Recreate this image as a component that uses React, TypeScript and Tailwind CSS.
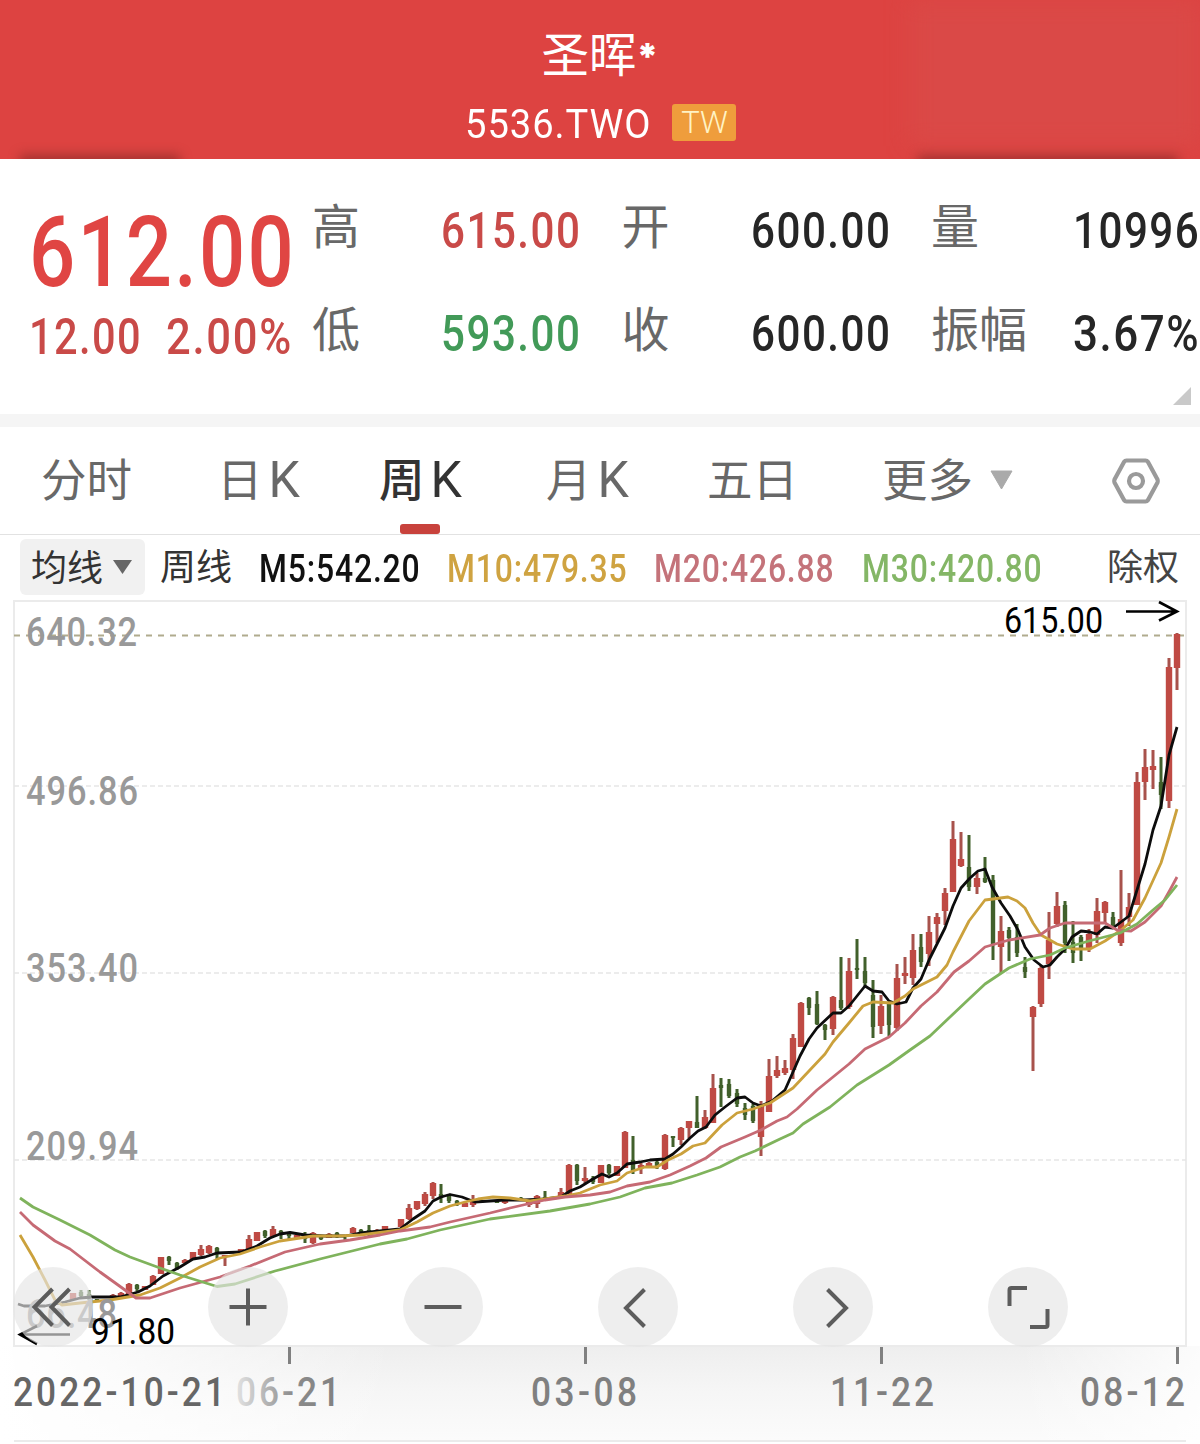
import { useState } from 'react';
import { clsx } from 'clsx';

type Candle = [x: number, high: number, top: number, bottom: number, low: number, dir: 'u' | 'd'];
type Point = [number, number];

const UP = '#bf4a44';
const UP_WICK = '#a8524c';
const DOWN = '#41602b';

const candles: Candle[] = [
  [73, 1293, 1293, 1300, 1300, 'u'],
  [81, 1290, 1292, 1296, 1298, 'd'],
  [89, 1290, 1294, 1298, 1300, 'd'],
  [97, 1299, 1299, 1302, 1302, 'd'],
  [113, 1294, 1295, 1297, 1297, 'u'],
  [121, 1292, 1293, 1296, 1296, 'u'],
  [129, 1283, 1284, 1294, 1294, 'u'],
  [137, 1284, 1285, 1289, 1291, 'd'],
  [145, 1286, 1286, 1290, 1290, 'u'],
  [153, 1275, 1276, 1285, 1285, 'u'],
  [161, 1257, 1257, 1274, 1274, 'u'],
  [169, 1256, 1257, 1261, 1265, 'd'],
  [177, 1262, 1263, 1269, 1270, 'd'],
  [185, 1259, 1260, 1263, 1263, 'u'],
  [193, 1252, 1252, 1260, 1260, 'u'],
  [201, 1245, 1249, 1255, 1256, 'u'],
  [209, 1245, 1246, 1253, 1254, 'u'],
  [217, 1247, 1248, 1254, 1259, 'd'],
  [225, 1255, 1255, 1257, 1266, 'u'],
  [241, 1249, 1249, 1253, 1253, 'u'],
  [249, 1235, 1239, 1250, 1250, 'u'],
  [257, 1232, 1232, 1241, 1241, 'u'],
  [265, 1230, 1231, 1236, 1238, 'd'],
  [273, 1226, 1229, 1237, 1237, 'u'],
  [281, 1230, 1231, 1234, 1239, 'd'],
  [289, 1232, 1233, 1236, 1240, 'd'],
  [297, 1234, 1235, 1239, 1239, 'u'],
  [305, 1232, 1236, 1239, 1243, 'd'],
  [313, 1232, 1233, 1243, 1244, 'u'],
  [321, 1236, 1237, 1239, 1240, 'd'],
  [329, 1233, 1234, 1238, 1238, 'u'],
  [337, 1232, 1233, 1236, 1238, 'd'],
  [345, 1235, 1235, 1237, 1240, 'd'],
  [353, 1227, 1228, 1233, 1233, 'u'],
  [361, 1229, 1230, 1233, 1234, 'd'],
  [369, 1225, 1230, 1232, 1236, 'd'],
  [377, 1229, 1230, 1232, 1232, 'u'],
  [385, 1226, 1226, 1230, 1230, 'u'],
  [401, 1219, 1219, 1227, 1227, 'u'],
  [409, 1204, 1208, 1219, 1220, 'u'],
  [417, 1201, 1201, 1209, 1210, 'u'],
  [425, 1192, 1194, 1204, 1206, 'u'],
  [433, 1182, 1183, 1196, 1199, 'u'],
  [441, 1184, 1194, 1198, 1203, 'd'],
  [449, 1195, 1196, 1201, 1203, 'd'],
  [457, 1200, 1201, 1205, 1206, 'd'],
  [465, 1203, 1203, 1207, 1207, 'u'],
  [473, 1195, 1202, 1205, 1207, 'u'],
  [481, 1200, 1201, 1203, 1203, 'd'],
  [497, 1200, 1201, 1203, 1203, 'd'],
  [505, 1200, 1200, 1203, 1204, 'u'],
  [521, 1197, 1198, 1200, 1201, 'd'],
  [529, 1200, 1202, 1205, 1207, 'u'],
  [537, 1195, 1196, 1204, 1208, 'u'],
  [545, 1191, 1197, 1198, 1198, 'd'],
  [561, 1188, 1192, 1197, 1197, 'u'],
  [569, 1164, 1165, 1194, 1194, 'u'],
  [577, 1164, 1165, 1181, 1185, 'd'],
  [585, 1167, 1178, 1181, 1183, 'u'],
  [593, 1176, 1178, 1182, 1184, 'd'],
  [601, 1165, 1165, 1183, 1183, 'u'],
  [609, 1164, 1165, 1173, 1175, 'd'],
  [617, 1166, 1166, 1176, 1176, 'u'],
  [625, 1131, 1132, 1168, 1168, 'u'],
  [633, 1136, 1160, 1171, 1174, 'd'],
  [641, 1163, 1165, 1168, 1174, 'u'],
  [649, 1162, 1163, 1168, 1168, 'u'],
  [657, 1160, 1162, 1167, 1169, 'd'],
  [665, 1134, 1135, 1169, 1170, 'u'],
  [673, 1136, 1136, 1138, 1147, 'd'],
  [681, 1127, 1128, 1140, 1145, 'u'],
  [689, 1121, 1121, 1128, 1138, 'u'],
  [697, 1096, 1122, 1128, 1128, 'd'],
  [705, 1110, 1117, 1128, 1129, 'u'],
  [713, 1074, 1088, 1123, 1123, 'u'],
  [721, 1078, 1085, 1088, 1107, 'd'],
  [729, 1079, 1084, 1096, 1098, 'd'],
  [737, 1089, 1093, 1104, 1107, 'd'],
  [745, 1103, 1108, 1115, 1120, 'd'],
  [753, 1104, 1106, 1121, 1123, 'd'],
  [761, 1101, 1105, 1137, 1156, 'u'],
  [769, 1059, 1076, 1112, 1112, 'u'],
  [777, 1056, 1070, 1076, 1078, 'u'],
  [785, 1060, 1068, 1073, 1075, 'u'],
  [793, 1034, 1038, 1070, 1079, 'u'],
  [801, 1002, 1003, 1047, 1047, 'u'],
  [809, 997, 998, 1008, 1015, 'd'],
  [817, 991, 1004, 1024, 1025, 'd'],
  [825, 1024, 1025, 1030, 1040, 'd'],
  [833, 996, 997, 1029, 1035, 'u'],
  [841, 957, 1000, 1008, 1010, 'd'],
  [849, 958, 971, 1007, 1009, 'u'],
  [857, 939, 968, 970, 979, 'd'],
  [865, 957, 971, 983, 987, 'd'],
  [873, 980, 995, 1027, 1038, 'd'],
  [881, 995, 1006, 1026, 1034, 'u'],
  [889, 1003, 1004, 1025, 1036, 'd'],
  [897, 964, 978, 1028, 1031, 'u'],
  [905, 957, 973, 976, 984, 'u'],
  [913, 934, 950, 978, 985, 'u'],
  [921, 934, 947, 962, 967, 'd'],
  [929, 916, 932, 954, 966, 'u'],
  [937, 913, 917, 924, 943, 'u'],
  [945, 888, 893, 911, 925, 'u'],
  [953, 821, 839, 892, 892, 'u'],
  [961, 832, 859, 866, 867, 'u'],
  [969, 835, 867, 887, 891, 'd'],
  [977, 873, 878, 887, 894, 'u'],
  [985, 857, 878, 882, 883, 'd'],
  [993, 875, 880, 945, 960, 'd'],
  [1001, 916, 931, 947, 973, 'u'],
  [1009, 927, 930, 938, 961, 'd'],
  [1017, 924, 937, 953, 957, 'd'],
  [1025, 957, 967, 972, 978, 'd'],
  [1033, 1006, 1007, 1017, 1071, 'u'],
  [1041, 965, 968, 1004, 1007, 'u'],
  [1049, 912, 940, 964, 979, 'u'],
  [1057, 892, 906, 924, 927, 'u'],
  [1065, 901, 905, 943, 953, 'd'],
  [1073, 921, 942, 953, 963, 'd'],
  [1081, 935, 937, 950, 961, 'd'],
  [1089, 929, 934, 948, 952, 'u'],
  [1097, 898, 911, 935, 943, 'u'],
  [1105, 901, 902, 913, 923, 'u'],
  [1113, 912, 917, 926, 928, 'd'],
  [1121, 870, 919, 943, 946, 'u'],
  [1129, 893, 907, 917, 926, 'u'],
  [1137, 772, 782, 905, 905, 'u'],
  [1145, 749, 767, 782, 800, 'u'],
  [1153, 750, 766, 770, 789, 'u'],
  [1161, 757, 782, 795, 809, 'd'],
  [1169, 658, 667, 801, 808, 'u'],
  [1177, 633, 634, 668, 690, 'u'],
];

const m5: Point[] = [
  [18, 1304], [24, 1306], [45, 1306], [65, 1302], [80, 1298], [92, 1297], [120, 1297], [138, 1292],
  [150, 1286], [163, 1276], [180, 1267], [193, 1259], [205, 1257], [217, 1253], [241, 1252], [257, 1246],
  [270, 1238], [280, 1234], [290, 1232.5], [305, 1235], [325, 1236], [345, 1236], [360, 1233], [380, 1231],
  [400, 1229], [413, 1219], [425, 1211], [433, 1201], [441, 1197], [450, 1194.5], [462, 1197], [475, 1202],
  [490, 1201], [505, 1200], [525, 1200], [545, 1199], [561, 1197], [570, 1191], [580, 1187], [593, 1179],
  [602, 1174], [609, 1177], [617, 1173], [627, 1164], [640, 1162], [650, 1160], [665, 1159], [673, 1154],
  [681, 1147], [690, 1138], [698, 1131], [706, 1127], [715, 1115], [725, 1107], [737, 1098], [745, 1097],
  [753, 1103], [761, 1106], [772, 1101], [785, 1090], [793, 1072], [800, 1056], [809, 1039], [817, 1028],
  [833, 1013], [841, 1013], [849, 1006], [865, 986], [873, 991], [882, 992], [889, 1001], [897, 1004],
  [906, 1002], [913, 988], [921, 979], [929, 960], [937, 944], [945, 928], [953, 906], [961, 888],
  [970, 878], [978, 871], [985, 869], [992, 887], [1001, 903], [1010, 916], [1018, 930], [1025, 947],
  [1034, 960], [1043, 967], [1050, 965], [1057, 957], [1065, 949], [1072, 937], [1081, 931], [1090, 932],
  [1097, 934], [1105, 927], [1113, 928], [1129, 916], [1137, 890], [1145, 864], [1153, 830], [1161, 806],
  [1169, 755], [1177, 727],
];

const m10: Point[] = [
  [20, 1235], [33, 1257], [45, 1280], [55, 1300], [62, 1305], [80, 1303], [110, 1300], [140, 1295],
  [160, 1288], [180, 1278], [200, 1267], [220, 1258], [240, 1254], [260, 1247], [280, 1241], [300, 1238],
  [313, 1236], [340, 1236], [360, 1235], [400, 1230], [417, 1222], [433, 1213], [450, 1206], [465, 1202],
  [478, 1199], [493, 1197], [510, 1198], [530, 1201], [545, 1199], [565, 1196], [580, 1193], [600, 1185],
  [617, 1181], [627, 1173], [645, 1167], [657, 1167], [668, 1160], [681, 1154], [693, 1146], [705, 1143],
  [722, 1125], [737, 1113], [753, 1109], [770, 1103], [793, 1088], [809, 1071], [825, 1054], [833, 1042],
  [849, 1023], [863, 1006], [873, 1002], [893, 1003], [905, 996], [913, 989], [921, 985], [937, 977],
  [947, 965], [953, 952], [969, 921], [985, 900], [993, 899], [1008, 897], [1017, 901], [1025, 908],
  [1033, 923], [1041, 935], [1057, 944], [1073, 949], [1090, 949], [1105, 941], [1121, 930], [1133, 920],
  [1145, 898], [1161, 863], [1169, 837], [1177, 809],
];

const m20: Point[] = [
  [20, 1212], [33, 1225], [55, 1241], [70, 1249], [100, 1272], [125, 1290], [136, 1298], [150, 1298],
  [180, 1288], [220, 1277], [250, 1266], [285, 1252], [320, 1244], [350, 1240], [380, 1235], [400, 1231],
  [430, 1227], [450, 1222], [490, 1213], [510, 1208], [545, 1200], [565, 1197], [590, 1195], [610, 1192],
  [627, 1186], [650, 1182], [670, 1175], [690, 1166], [706, 1158], [721, 1147], [745, 1137], [761, 1130],
  [777, 1121], [787, 1117], [797, 1109], [817, 1090], [849, 1064], [865, 1049], [889, 1037], [905, 1023],
  [921, 1006], [937, 992], [954, 972], [969, 961], [985, 947], [1009, 940], [1040, 935], [1050, 928],
  [1065, 923], [1090, 923], [1105, 923], [1117, 930], [1131, 931], [1145, 922], [1161, 906], [1170, 890],
  [1177, 877],
];

const m30: Point[] = [
  [20, 1198], [33, 1207], [60, 1220], [90, 1235], [115, 1250], [130, 1257], [160, 1268], [180, 1275],
  [217, 1286.5], [235, 1284], [275, 1271], [320, 1259], [360, 1249], [380, 1244], [407, 1239], [440, 1230],
  [490, 1219], [550, 1211], [590, 1204], [620, 1197], [645, 1188], [672, 1183], [697, 1175], [720, 1167],
  [740, 1157], [755, 1151], [780, 1139], [793, 1133], [803, 1124], [830, 1107], [857, 1085], [889, 1065],
  [910, 1050], [930, 1036], [950, 1017], [969, 999], [985, 984], [1009, 968], [1030, 959], [1050, 955],
  [1065, 948], [1089, 941], [1120, 933], [1137, 924], [1153, 910], [1165, 900], [1177, 885],
];

const averages = [
  { points: m5, color: '#0c0c0c' },
  { points: m10, color: '#cba13c' },
  { points: m20, color: '#c66a74' },
  { points: m30, color: '#7fb35c' },
];

const priceLabels = [
  { text: '640.32', y: 646, width: 111 },
  { text: '496.86', y: 805, width: 112 },
  { text: '353.40', y: 982, width: 112 },
  { text: '209.94', y: 1160, width: 112 },
  { text: '66.48', y: 1328, width: 91 },
];

const dateLabels = [
  { text: '2022-10-21', x: 13, width: 212, fill: '#666' },
  { text: '06-21', x: 236, width: 104, fill: 'url(#dateFade)' },
  { text: '03-08', x: 531, width: 106, fill: '#808080' },
  { text: '11-22', x: 830, width: 104, fill: '#808080' },
  { text: '08-12', x: 1080, width: 105, fill: '#808080' },
];

const tabs = [
  { label: '分时', cell: 'w-[176px]' },
  { label: '日K', cell: 'w-[162px]' },
  { label: '周K', cell: 'w-[167px]' },
  { label: '月K', cell: 'w-[161px]' },
  { label: '五日', cell: 'w-[161px]' },
];

const stats = [
  [
    { name: '高', value: '615.00', color: 'text-[#c94a48]' },
    { name: '低', value: '593.00', color: 'text-[#429a58]' },
  ],
  [
    { name: '开', value: '600.00', color: 'text-[#262626]' },
    { name: '收', value: '600.00', color: 'text-[#262626]' },
  ],
  [
    { name: '量', value: '10996', color: 'text-[#262626]' },
    { name: '振幅', value: '3.67%', color: 'text-[#262626]' },
  ],
];

const legend = [
  { text: 'M5:542.20', cell: 'w-[188px]', color: 'text-[#111]' },
  { text: 'M10:479.35', cell: 'w-[207px]', color: 'text-[#cfa341]' },
  { text: 'M20:426.88', cell: 'w-[208px]', color: 'text-[#c4737a]' },
  { text: 'M30:420.80', cell: 'w-[244px]', color: 'text-[#84b666]' },
];

const controls = [
  { name: 'rewind', d: 'M39.500 22 21.500 40 39.500 58.500M56.500 22 38.500 40 56.500 58.500' },
  { name: 'zoom in', d: 'M21.500 40h37M40 21.500v37' },
  { name: 'zoom out', d: 'M21.500 40h37' },
  { name: 'previous', d: 'M46.500 22.500 28 41 46.500 59.500' },
  { name: 'next', d: 'M34.500 22.500 53 41 34.500 59.500' },
  { name: 'full screen', d: 'M21.500 39V23q0-2 2-2H39M59.500 42V58q0 2-2 2H42' },
];

const digits = "font-['Roboto','Noto_Sans_CJK_SC',sans-serif]";

const toPath = (points: Point[]) => 'M' + points.map(([x, y]) => `${x} ${y}`).join('L');

function Header() {
  return (
    <header className="relative flex h-[159px] flex-col items-center overflow-hidden bg-[#dd4341] text-white">
      <div className="absolute -bottom-3 left-5 h-4 w-[160px] bg-[#7c2624]/60 blur-[6px]" />
      <div className="absolute -bottom-3 left-[918px] h-4 w-[260px] bg-[#7c2624]/60 blur-[6px]" />
      <div className="absolute top-0 left-[910px] h-[146px] w-[290px] bg-[#d65350]/40 blur-md" />
      <h1 className="mt-[25px] flex h-[54px] items-center text-[47.500px] leading-[54px]">
        圣晖<span className="relative top-1 font-['Inter'] text-[36px] font-black">*</span>
      </h1>
      <div className="mt-[19px] flex h-[50px] items-center">
        <span className={clsx(digits, 'w-[187px] pt-1 text-[41px] whitespace-nowrap')}>
          <span className="inline-block origin-left scale-x-[0.93] tracking-[0.025em]">5536.TWO</span>
        </span>
        <span className={clsx(digits, 'mb-[2px] ml-[20px] flex h-[37px] w-[64px] items-center justify-center rounded-[3px] bg-[#ef9d3c] pt-0.5 pl-0.5 text-[31px] font-light text-[#fff3c4]')}>
          TW
        </span>
      </div>
    </header>
  );
}

function Quote() {
  return (
    <section className={clsx(digits, 'relative flex h-[255px] overflow-hidden whitespace-nowrap')}>
      <div className="w-[312px] shrink-0 pl-[29px] font-medium">
        <div className="mt-[43px] h-[102px] origin-left scale-x-[0.83] text-[98px] leading-[102px] tracking-[0.027em] text-[#e04543]">612.00</div>
        <div className="mt-[3px] flex h-[60px] text-[50px] leading-[60px] text-[#c94a48]">
          <span className="w-[139px] origin-left scale-x-[0.83] tracking-[0.035em]">12.00</span>
          <span className="origin-left scale-x-[0.87] tracking-[0.04em]">2.00%</span>
        </div>
      </div>
      {stats.map((column, i) => (
        <dl key={i} className="w-[309.500px] shrink-0 pt-[41px]">
          {column.map((item) => (
            <div key={item.name} className="flex h-[103px] items-start">
              <dt className={clsx('shrink-0 text-[48px] leading-[55px] text-[#686868]', i === 2 ? 'w-[142px]' : 'w-[129px]')}>{item.name}</dt>
              <dd
                className={clsx(
                  'origin-left text-[50.500px] leading-[62px] font-medium tracking-[0.035em]',
                  item.value.endsWith('%') ? 'scale-x-[0.87]' : 'scale-x-[0.835]',
                  item.color,
                )}
              >
                {item.value}
              </dd>
            </div>
          ))}
        </dl>
      ))}
      <svg className="absolute right-[9px] bottom-[9px] h-[18px] w-[18px]" viewBox="0 0 18 18">
        <path d="M18 0V18H0Z" fill="#c9c9c9" />
      </svg>
    </section>
  );
}

function PeriodTabs() {
  const [active, setActive] = useState('周K');
  return (
    <nav className="flex h-[108px] items-start border-b border-[#e2e2e2] pl-[41px] text-[45.500px] text-[#686868]">
      {tabs.map((tab) => (
        <div key={tab.label} className={clsx('h-[107px] shrink-0', tab.cell)}>
          <button
            type="button"
            onClick={() => setActive(tab.label)}
            className={clsx('flex h-[107px] flex-col items-center whitespace-nowrap', tab.label === active && 'font-medium text-[#333]')}
          >
            <span className="mt-[17px] flex h-[66px] items-center">
              {tab.label.replace('K', '')}
              {tab.label.endsWith('K') && <span className="mt-1.5 ml-[6px] font-['Roboto'] text-[50px] font-normal">K</span>}
            </span>
            {tab.label === active && <span className="mt-[14px] h-[10px] w-[40px] rounded-[3px] bg-[#c8423c]" />}
          </button>
        </div>
      ))}
      <button type="button" className="mt-[17px] flex h-[66px] w-[229px] shrink-0 items-center pl-[14px]">
        更多
        <svg className="mt-[5px] ml-[17px] h-[20px] w-[23px]" viewBox="0 0 23 20">
          <path d="M1 1H22L11.500 19Z" fill="#aaa" stroke="#aaa" strokeLinejoin="round" />
        </svg>
      </button>
      <button type="button" aria-label="settings" className="mt-[29px] ml-[14px] shrink-0">
        <svg className="h-[50px] w-[50px]" viewBox="0 0 50 50" fill="none" stroke="#9a9a9a" strokeWidth="4.200" strokeLinejoin="round">
          <path d="M15.500 4.500H34.500Q36 4.500 37 6L46.500 23.500Q47 25 46.500 26.500L37 44Q36 45.500 34.500 45.500H15.500Q14 45.500 13 44L3.500 26.500Q3 25 3.500 23.500L13 6Q14 4.500 15.500 4.500Z" />
          <circle cx="25" cy="25" r="7" />
        </svg>
      </button>
    </nav>
  );
}

function Legend() {
  return (
    <div className="flex h-[65px] items-start pt-1 pl-5 text-[36px] text-[#333]">
      <button type="button" className="flex h-[56px] w-[125px] items-center rounded-md bg-[#f1f1f1] pb-[5px] pl-[11px]">
        均线
        <svg className="mt-[5px] ml-[10px] h-[14px] w-[19px]" viewBox="0 0 19 14">
          <path d="M0 0H19L9.500 14Z" fill="#666" />
        </svg>
      </button>
      <span className="ml-[15px] w-[99px] leading-[51px]">周线</span>
      {legend.map((item) => (
        <span key={item.text} className={clsx(digits, 'pt-px text-[38px] leading-[58px] font-medium whitespace-nowrap', item.cell, item.color)}>
          <span className="inline-block origin-left scale-x-[0.84] tracking-[0.026em]">{item.text}</span>
        </span>
      ))}
      <span className="pl-px leading-[51px] text-[#444]">除权</span>
    </div>
  );
}

// glyphs are squeezed horizontally, the remaining width goes into the spacing
const SQUEEZE = 0.86;

function AxisText({ text, x, y, size, width, fill }: { text: string; x: number; y: number; size: number; width: number; fill: string }) {
  return (
    <text
      transform={`translate(${x} ${y}) scale(${SQUEEZE} 1)`}
      fontSize={size}
      fontWeight="500"
      fill={fill}
      textLength={width / SQUEEZE}
    >
      {text}
    </text>
  );
}

function KLineChart() {
  return (
    <div className="relative h-[844px]">
      <svg className="block h-[844px] w-[1200px] font-['Roboto']" viewBox="0 600 1200 844">
        <defs>
          <linearGradient id="axisShade" x1="0" y1="0" x2="0" y2="1">
            <stop offset="0" stopColor="#eeeeee" />
            <stop offset="0.500" stopColor="#f6f6f6" />
            <stop offset="1" stopColor="#fbfbfb" />
          </linearGradient>
          <linearGradient id="axisEdge" x1="0" y1="0" x2="1" y2="0">
            <stop offset="0" stopColor="#fff" />
            <stop offset="0.330" stopColor="#fff" stopOpacity="0" />
            <stop offset="0.850" stopColor="#fff" stopOpacity="0" />
            <stop offset="1" stopColor="#fff" stopOpacity="0.800" />
          </linearGradient>
          <linearGradient id="dateFade" x1="0" y1="0" x2="1" y2="0">
            <stop offset="0" stopColor="#e2e2e2" />
            <stop offset="0.550" stopColor="#8c8c8c" />
            <stop offset="1" stopColor="#808080" />
          </linearGradient>
        </defs>

        <rect x="0" y="1346" width="1200" height="94" fill="url(#axisShade)" />
        <rect x="0" y="1346" width="1200" height="94" fill="url(#axisEdge)" />
        <path d="M14 1441H1186" stroke="#ebebeb" strokeWidth="2" />
        <rect x="14" y="601" width="1172" height="745" fill="none" stroke="#ebebeb" strokeWidth="2" />

        {[786, 973, 1160].map((y) => (
          <path key={y} d={`M14 ${y}H1186`} stroke="#e6e6e6" strokeWidth="1.500" strokeDasharray="5 3" />
        ))}

        <path d="M14 635.500H1186" stroke="#b0ab8e" strokeWidth="2" strokeDasharray="6 6" />

        {candles.map(([x, high, top, bottom, low, dir]) => {
          const bodyWidth = dir === 'u' ? 6.4 : 4.4;
          return (
            <g key={x}>
              <rect x={x - 1.5} y={high} width="3" height={low - high} fill={dir === 'u' ? UP_WICK : DOWN} />
              <rect x={x - bodyWidth / 2} y={top} width={bodyWidth} height={bottom - top} fill={dir === 'u' ? UP : DOWN} />
            </g>
          );
        })}

        {averages.map((line) => (
          <path key={line.color} d={toPath(line.points)} fill="none" stroke={line.color} strokeWidth="2.800" strokeLinejoin="round" />
        ))}

        {priceLabels.map((label) => (
          <AxisText key={label.text} text={label.text} x={26} y={label.y} size={40} width={label.width} fill="#999" />
        ))}

        <text x="1004" y="633" fontSize="36" fill="#000" textLength="99" lengthAdjust="spacingAndGlyphs">615.00</text>
        <path d="M1126 611.500H1177M1159 602 1177 611.500 1159 620.500" fill="none" stroke="#000" strokeWidth="2.600" />
        <text x="91" y="1344" fontSize="36" fill="#000" textLength="84" lengthAdjust="spacingAndGlyphs">91.80</text>
        <path d="M70 1334.500H20M37 1326 20 1334.500 37 1344" fill="none" stroke="#000" strokeWidth="2.600" />

        {[289.5, 585.5, 881.5, 1177.5].map((x) => (
          <path key={x} d={`M${x} 1347V1364`} stroke="#808080" strokeWidth="3" />
        ))}
        {dateLabels.map((label) => (
          <AxisText key={label.text} text={label.text} x={label.x} y={1406} size={41} width={label.width} fill={label.fill} />
        ))}
      </svg>

      <div className="absolute top-[667px] left-[13px] flex gap-[115px]">
        {controls.map((control) => (
          <button key={control.name} type="button" aria-label={control.name} className="h-[80px] w-[80px] rounded-full bg-[#e5e5e5]/65">
            <svg className="h-[80px] w-[80px]" viewBox="0 0 80 80" fill="none" stroke="#5c5c5c" strokeWidth="4">
              <path d={control.d} />
            </svg>
          </button>
        ))}
      </div>
    </div>
  );
}

export default function App() {
  return (
    <main className="h-[1444px] w-[1200px] overflow-hidden bg-white font-['Noto_Sans_CJK_SC',sans-serif]">
      <Header />
      <Quote />
      <div className="h-[13px] bg-[#f5f5f5]" />
      <PeriodTabs />
      <Legend />
      <KLineChart />
    </main>
  );
}
